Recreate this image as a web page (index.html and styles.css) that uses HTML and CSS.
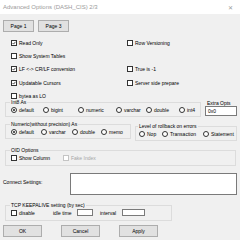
FILE: index.html
```html
<!DOCTYPE html>
<html>
<head>
<meta charset="utf-8">
<link rel="stylesheet" href="styles.css">
</head>
<body>
<div class="titlebar"><span class="title">Advanced Options (DASH_CIS) 2/3</span><span class="close">✕</span></div>
<div class="main">
  <div class="tabs">
    <button class="btn page">Page 1</button>
    <button class="btn page">Page 3</button>
  </div>
  <div class="checks">
    <label class="cb"><span class="box"><svg viewBox="0 0 4 4"><polyline points="0.5,2 1.6,3.1 3.5,0.8"/></svg></span>Read Only</label>
    <label class="cb"><span class="box"></span>Row Versioning</label>
    <label class="cb"><span class="box"></span>Show System Tables</label>
    <span></span>
    <label class="cb"><span class="box"><svg viewBox="0 0 4 4"><polyline points="0.5,2 1.6,3.1 3.5,0.8"/></svg></span>LF &lt;-&gt; CR/LF conversion</label>
    <label class="cb"><span class="box"></span>True is -1</label>
    <label class="cb"><span class="box"><svg viewBox="0 0 4 4"><polyline points="0.5,2 1.6,3.1 3.5,0.8"/></svg></span>Updatable Cursors</label>
    <label class="cb"><span class="box"></span>Server side prepare</label>
    <label class="cb"><span class="box"></span>bytea as LO</label>
    <span></span>
  </div>

  <div class="row int8row">
    <fieldset class="group int8">
      <legend>Int8 As</legend>
      <div class="radios">
        <label class="rb w32"><span class="radio on"></span>default</label>
        <label class="rb w35"><span class="radio"></span>bigint</label>
        <label class="rb w38"><span class="radio"></span>numeric</label>
        <label class="rb w30"><span class="radio"></span>varchar</label>
        <label class="rb w33"><span class="radio"></span>double</label>
        <label class="rb"><span class="radio"></span>int4</label>
      </div>
    </fieldset>
    <div class="extra">
      <div class="extra-label">Extra Opts</div>
      <div class="input extra-input">0x0</div>
    </div>
  </div>

  <div class="row pair">
    <fieldset class="group numeric">
      <legend>Numeric(without precision) As</legend>
      <div class="radios">
        <label class="rb w30"><span class="radio on"></span>default</label>
        <label class="rb w31"><span class="radio"></span>varchar</label>
        <label class="rb w29"><span class="radio"></span>double</label>
        <label class="rb"><span class="radio"></span>memo</label>
      </div>
    </fieldset>
    <fieldset class="group rollback">
      <legend>Level of rollback on errors</legend>
      <div class="radios">
        <label class="rb w23"><span class="radio"></span>Nop</label>
        <label class="rb w41"><span class="radio"></span>Transaction</label>
        <label class="rb"><span class="radio"></span>Statement</label>
      </div>
    </fieldset>
  </div>

  <fieldset class="group oid">
    <legend>OID Options</legend>
    <div class="radios">
      <label class="cb w52"><span class="box"></span>Show Column</label>
      <label class="cb disabled"><span class="box"></span>Fake Index</label>
    </div>
  </fieldset>

  <div class="row connect">
    <span class="connect-label">Connect Settings:</span>
    <div class="input textarea"></div>
  </div>

  <fieldset class="group tcp">
    <legend>TCP KEEPALIVE setting (by sec)</legend>
    <div class="radios">
      <label class="cb w42"><span class="box"></span>disable</label>
      <span class="lbl w24">idle time</span>
      <div class="input small idle"></div>
      <span class="lbl w22">interval</span>
      <div class="input small interval"></div>
    </div>
  </fieldset>

  <div class="buttons">
    <button class="btn act">OK</button>
    <button class="btn act">Cancel</button>
    <button class="btn act">Apply</button>
  </div>
</div>
</body>
</html>
```

FILE: styles.css
```css
* { box-sizing: border-box; }
html, body { margin: 0; padding: 0; }
body {
  width: 240px;
  height: 240px;
  overflow: hidden;
  background: #f0f0f0;
  font-family: "Liberation Sans", Arial, sans-serif;
  font-size: 5px;
  color: #000;
}
.titlebar {
  height: 14px;
  background: #fff;
  display: flex;
  align-items: center;
  justify-content: space-between;
  padding: 0 7px 0 3px;
}
.title { font-size: 6px; color: #9a9a9a; }
.close { font-size: 6px; color: #9a9a9a; }

.main { padding: 0 3px; }

.btn {
  font-family: inherit;
  font-size: 5px;
  color: #000;
  background: #e1e1e1;
  border: 1px solid #adadad;
  height: 12px;
  padding: 0;
  margin: 0;
}
.tabs { display: flex; gap: 4px; margin-top: 6px; }
.page { width: 31px; }

.checks {
  display: grid;
  grid-template-columns: 116px 1fr;
  grid-auto-rows: 13.3px;
  padding-left: 8px;
  margin-top: 4px;
}
.cb, .rb { display: flex; align-items: center; white-space: nowrap; }
.box {
  width: 6px; height: 6px;
  border: 1px solid #333;
  background: #fff;
  margin-right: 2px;
  flex: none;
  display: flex;
}
.box svg { width: 4px; height: 4px; fill: none; stroke: #222; stroke-width: 0.8; }
.disabled { color: #a6a6a6; }
.disabled .box { border-color: #c4c4c4; }

.radio {
  width: 6px; height: 6px;
  border: 1px solid #333;
  border-radius: 50%;
  background: #fff;
  margin-right: 2px;
  flex: none;
  display: flex;
  align-items: center;
  justify-content: center;
}
.radio.on::after {
  content: "";
  width: 2px; height: 2px;
  border-radius: 50%;
  background: #222;
}

.group {
  border: 1px solid #dcdcdc;
  margin: 0;
  padding: 0 0 2px 5px;
  min-width: 0;
}
.group legend {
  padding: 0 1px;
  margin-left: -1px;
  font-size: 5px;
  line-height: 6px;
}
.radios { display: flex; align-items: center; height: 9px; }

.w22 { width: 22px; } .w23 { width: 23px; } .w24 { width: 24px; }
.w29 { width: 29px; } .w30 { width: 30px; } .w31 { width: 31px; }
.w32 { width: 32px; } .w33 { width: 33px; } .w35 { width: 35px; }
.w38 { width: 38px; } .w41 { width: 41px; } .w42 { width: 42px; }
.w52 { width: 52px; }

.row { display: flex; }
.int8row { margin-top: -3px; align-items: flex-start; }
.int8 { width: 197px; margin-left: 2px; }
.extra { margin-left: 4px; padding-top: 1px; }
.extra-label { line-height: 6px; padding-left: 2px; }
.input { background: #fff; border: 1px solid #7a7a7a; }
.extra-input { width: 32px; height: 10px; line-height: 8px; padding-left: 2px; }

.pair { margin-top: 4px; align-items: flex-start; }
.numeric { width: 126px; margin-left: 2px; }
.rollback { width: 102px; margin-left: 4px; margin-top: 2px; padding-left: 3px; }

.oid { width: 231px; margin-left: 2px; margin-top: 6px; padding-bottom: 3px; }

.connect { margin-top: 7px; align-items: flex-start; }
.connect-label { width: 67px; padding-top: 6px; }
.textarea { width: 167px; height: 22px; }

.tcp { width: 167px; margin-left: 2px; margin-top: 7px; padding-bottom: 3px; }
.lbl { white-space: nowrap; }
.small { height: 7px; }
.idle { width: 16px; margin-right: 7px; }
.interval { width: 23px; }

.buttons { display: flex; gap: 19px; margin-top: 4px; }
.act { width: 39px; }
```
